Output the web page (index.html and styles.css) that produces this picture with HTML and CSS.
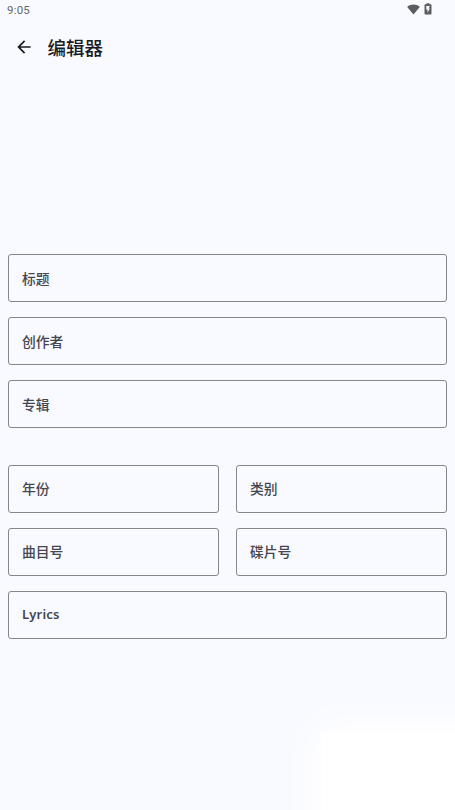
FILE: index.html
```html
<!DOCTYPE html>
<html lang="zh-CN">
<head>
<meta charset="utf-8">
<title>编辑器</title>
<link rel="stylesheet" href="styles.css">
</head>
<body>
<div class="screen">
  <header class="status">
    <span class="time">9:05</span>
    <span class="status-icons">
      <svg class="wifi" viewBox="0 0 13 11"><path d="M.2 2.9C3.8-.3 9.2-.3 12.8 2.9L6.5 10.6Z"/></svg>
      <svg class="battery" viewBox="0 0 8 12"><path fill-rule="evenodd" d="M2.5.3h3v1h1.200q.8 0 .8.8v8.600q0 .8-.8.8H1.300q-.8 0-.8-.8V2.100q0-.8.8-.8h1.200zM2.300 3v3.600h1.200v3.200L5.900 5.600H4.600L5.900 3z"/></svg>
    </span>
  </header>
  <nav class="appbar">
    <svg class="back" viewBox="0 0 24 24"><path d="M20 11H7.830l5.590-5.590L12 4l-8 8 8 8 1.410-1.410L7.830 13H20z"/></svg>
    <h1 class="heading">编辑器</h1>
  </nav>
  <main class="form">
    <div class="field"><span>标题</span></div>
    <div class="field"><span>创作者</span></div>
    <div class="field"><span>专辑</span></div>
    <div class="row row-spaced">
      <div class="field"><span>年份</span></div>
      <div class="field"><span>类别</span></div>
    </div>
    <div class="row">
      <div class="field"><span>曲目号</span></div>
      <div class="field"><span>碟片号</span></div>
    </div>
    <div class="field"><span class="latin">Lyrics</span></div>
  </main>
  <div class="glow"></div>
</div>
</body>
</html>
```
FILE: styles.css
```css
* { box-sizing: border-box; }
body { margin: 0; background: #f9faff; }
.screen {
  position: relative;
  height: 810px;
  overflow: hidden;
  font-family: "Noto Sans CJK SC", sans-serif;
  color: #1a1b22;
}
.status {
  display: flex;
  justify-content: space-between;
  height: 20px;
  padding: 0 23px 0 7px;
  color: #66676c;
}
.time { font: 400 11.5px/21px Roboto, sans-serif; letter-spacing: .2px; }
.status-icons { display: flex; gap: 4px; padding-top: 3px; fill: #5c5d61; }
.wifi { width: 13px; height: 11px; margin-top: 1px; }
.battery { width: 8px; height: 12px; }
.appbar {
  display: flex;
  align-items: center;
  height: 56px;
  padding-left: 14px;
}
.back { width: 20px; height: 20px; margin-top: -2px; fill: #1a1b22; }
.heading { margin: -2px 0 0 13.500px; font-size: 18.500px; font-weight: 500; line-height: 28px; }
.form {
  display: flex;
  flex-direction: column;
  gap: 15.200px;
  padding: 178px 8px 0;
}
.field {
  display: flex;
  align-items: center;
  height: 48px;
  padding: 0 0 1px 13px;
  border: 1px solid #84858d;
  border-radius: 3px;
  color: #45464f;
  font-size: 13.800px;
  font-weight: 500;
}
.row { display: grid; grid-template-columns: 1fr 1fr; gap: 17px; }
.row-spaced { margin-top: 21px; }
.latin { font-family: "Noto Sans", sans-serif; font-size: 13px; font-weight: 600; letter-spacing: .2px; }
.glow {
  position: absolute;
  right: -40px;
  bottom: -40px;
  width: 174px;
  height: 118px;
  background: #fff;
  box-shadow: 0 0 36px 8px #fff;
}
```
